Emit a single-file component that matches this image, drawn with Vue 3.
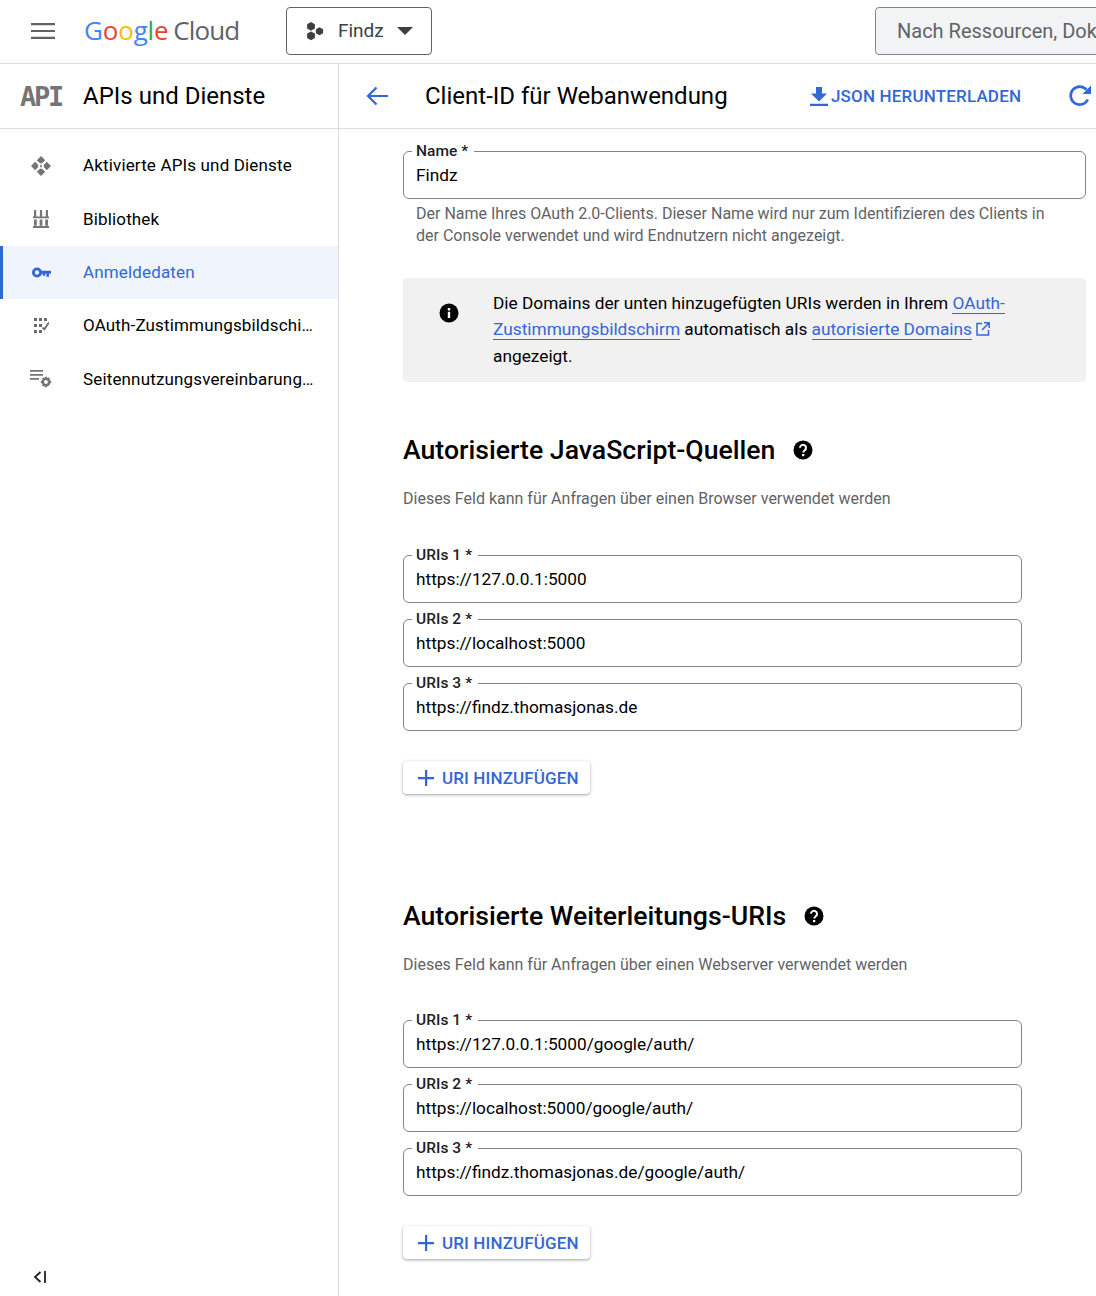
<script setup>
const navItems = [
  { id: 'apis', label: 'Aktivierte APIs und Dienste' },
  { id: 'lib', label: 'Bibliothek' },
  { id: 'creds', label: 'Anmeldedaten', active: true },
  { id: 'oauth', label: 'OAuth-Zustimmungsbildschirm' },
  { id: 'terms', label: 'Seitennutzungsvereinbarungen' }
]

const sections = [
  {
    title: 'Autorisierte JavaScript-Quellen',
    hint: 'Dieses Feld kann für Anfragen über einen Browser verwendet werden',
    uris: ['https://127.0.0.1:5000', 'https://localhost:5000', 'https://findz.thomasjonas.de']
  },
  {
    title: 'Autorisierte Weiterleitungs-URIs',
    hint: 'Dieses Feld kann für Anfragen über einen Webserver verwendet werden',
    uris: [
      'https://127.0.0.1:5000/google/auth/',
      'https://localhost:5000/google/auth/',
      'https://findz.thomasjonas.de/google/auth/'
    ]
  }
]
</script>

<template>
  <div class="page">
    <header class="topbar">
      <svg class="menu-icon" width="24" height="16" viewBox="0 0 24 16">
        <path d="M0 0h24v2.2H0zM0 6.9h24v2.2H0zM0 13.8h24V16H0z" fill="#5f6368" />
      </svg>
      <div class="logo">
        <span class="g-blue">G</span><span class="g-red">o</span><span class="g-yellow">o</span><span class="g-blue">g</span><span class="g-green">l</span><span class="g-red">e</span>
        <span class="cloud">Cloud</span>
      </div>
      <button class="project">
        <svg width="20" height="20" viewBox="0 0 20 20">
          <path fill="#3c4043" d="M6 1l3.9 2.2v4.4L6 9.8 2.1 7.6V3.2zM6 10.4l3.9 2.2v4.4L6 19.200l-3.900-2.200v-4.400zM14.500 6.200l3.600 2v4l-3.600 2-3.600-2v-4z" />
        </svg>
        <span class="project-name">Findz</span>
        <span class="caret"></span>
      </button>
      <div class="search">Nach Ressourcen, Dokumentation, Produkten und mehr suchen</div>
    </header>

    <div class="body">
      <aside class="sidebar">
        <div class="side-head">
          <span class="api-mark">API</span>
          <span class="side-title">APIs und Dienste</span>
        </div>
        <nav class="nav">
          <a v-for="item in navItems" :key="item.id" class="nav-item" :class="{ active: item.active }">
            <span class="nav-icon">
              <svg v-if="item.id === 'apis'" width="20" height="20" viewBox="0 0 20 20" fill="#757575">
                <path d="M10 0l4.200 4.200L11 7.200H9L5.800 4.200zM10 20l4.200-4.200L11 12.800H9l-3.200 3zM0 10l4.200-4.200L7.200 9v2l-3 3.200zM20 10l-4.200-4.200L12.800 9v2l3 3.200z" />
                <path d="M9 8.700h2v1H9zM9 10.300h2v1H9z" />
              </svg>
              <svg v-else-if="item.id === 'lib'" width="16" height="18" viewBox="0 0 16 18" fill="#757575">
                <path d="M1 0h2.200v6.500H1zM6.900 0h2.200v6.500H6.900zM12.800 0H15v6.500h-2.200zM0 6.500h16v1.800H0zM1 9.400h2.800v6.400H1zM6.600 9.400h2.800v6.400H6.600zM12.200 9.400H15v6.400h-2.800zM0 16h16v2H0z" />
              </svg>
              <svg v-else-if="item.id === 'creds'" width="19" height="11" viewBox="0 0 19 11">
                <circle cx="5" cy="5.500" r="3.600" fill="none" stroke="#3367d6" stroke-width="2.800" />
                <path d="M9 3.800h10v3h-2v3h-2.600v-3h-1.200v2H10.800V6.800H9z" fill="#3367d6" />
              </svg>
              <svg v-else-if="item.id === 'oauth'" width="15" height="15" viewBox="0 0 15 15" fill="#6b6b6b">
                <path d="M0 0h3v3H0zM5 0h3v3H5zM10 0h3v3h-3zM0 6h3v3H0zM5 6h3v3H5zM0 12h3v3H0zM5 12h3v3H5z" />
                <path d="M8.500 9.500l1.800 1.800L15 4.500" fill="none" stroke="#6b6b6b" stroke-width="1.800" />
              </svg>
              <svg v-else width="22" height="18" viewBox="0 0 22 18" fill="#757575">
                <path d="M0 0h13v1.800H0zM0 4h13v1.800H0zM0 8h9v1.800H0z" />
                <circle cx="16" cy="12" r="3.200" fill="none" stroke="#757575" stroke-width="2.600" />
                <path d="M15 6.800h2v2h-2zM15 15.200h2v2h-2zM10.800 11h2v2h-2zM19.200 11h2v2h-2zM12 8.700l1.400-1.400 1.400 1.400-1.400 1.400zM17.200 14l1.400-1.400 1.400 1.400-1.400 1.400zM12 15.300l1.400-1.400 1.400 1.400-1.400 1.400zM17.200 8.700l1.400-1.400 1.400 1.400-1.400 1.400z" />
              </svg>
            </span>
            <span class="nav-label">{{ item.label }}</span>
          </a>
        </nav>
        <div class="collapse">
          <svg width="14" height="12" viewBox="0 0 14 12" fill="none" stroke="#202124" stroke-width="1.800">
            <path d="M7.500 1L2 6l5.500 5" />
            <path d="M12 0v12" />
          </svg>
        </div>
      </aside>

      <main class="main">
        <div class="subbar">
          <svg class="back" width="22" height="20" viewBox="0 0 22 20" fill="none" stroke="#3367d6" stroke-width="2.200">
            <path d="M22 10H2.500M10.500 1.500L2 10l8.500 8.500" />
          </svg>
          <h1 class="page-title">Client-ID für Webanwendung</h1>
          <a class="download">
            <svg width="18" height="19" viewBox="0 0 18 19" fill="#3367d6">
              <path d="M6 0h6v6.500h5L9 14.500 1 6.500h5zM0 16.800h18V19H0z" />
            </svg>
            <span>JSON HERUNTERLADEN</span>
          </a>
          <svg class="refresh" width="24" height="24" viewBox="0 0 24 24" fill="none">
            <path d="M19.800 15.500A9 9 0 1 1 18.500 5.700" stroke="#3367d6" stroke-width="2.600" />
            <path d="M23 1.500V10h-8.500z" fill="#3367d6" />
          </svg>
        </div>

        <div class="content">
          <div class="field wide">
            <label class="field-label">Name *</label>
            <div class="field-value">Findz</div>
          </div>
          <p class="name-hint">
            Der Name Ihres OAuth 2.0-Clients. Dieser Name wird nur zum Identifizieren des Clients in der Console verwendet und wird Endnutzern nicht angezeigt.
          </p>

          <div class="notice">
            <svg class="notice-icon" width="20" height="20" viewBox="0 0 20 20">
              <circle cx="10" cy="10" r="9.500" fill="#000" />
              <path d="M8.800 8.800h2.400V15H8.800zM8.800 5h2.400v2.400H8.800z" fill="#fff" />
            </svg>
            <p class="notice-text">
              Die Domains der unten hinzugefügten URIs werden in Ihrem <a class="link">OAuth-Zustimmungsbildschirm</a> automatisch als <a class="link">autorisierte Domains</a><svg class="external" width="14" height="14" viewBox="0 0 14 14" fill="none" stroke="#3367d6" stroke-width="1.500">
                <path d="M6 1.500H1v11.500h11.500V8M8 .8h5.200V6M13 1L6 8" />
              </svg>
              angezeigt.
            </p>
          </div>

          <section v-for="section in sections" :key="section.title" class="uri-section">
            <h2 class="section-title">
              {{ section.title }}
              <svg width="20" height="20" viewBox="0 0 20 20">
                <circle cx="10" cy="10" r="9.500" fill="#000" />
                <path d="M7 7.800a3 3 0 1 1 4.800 2.400c-1 .8-1.500 1.200-1.500 2.400" fill="none" stroke="#fff" stroke-width="2" />
                <path d="M9 14h2.300v2.200H9z" fill="#fff" />
              </svg>
            </h2>
            <p class="section-hint">{{ section.hint }}</p>
            <div class="uri-list">
              <div v-for="(uri, i) in section.uris" :key="uri" class="field">
                <label class="field-label">URIs {{ i + 1 }} *</label>
                <div class="field-value">{{ uri }}</div>
              </div>
            </div>
            <button class="add-btn">
              <svg width="18" height="18" viewBox="0 0 18 18">
                <path d="M8 1h2.200v7H17v2.200h-6.800V17H8v-6.800H1V8h7z" fill="#3367d6" />
              </svg>
              URI HINZUFÜGEN
            </button>
          </section>
        </div>
      </main>
    </div>
  </div>
</template>

<style>
html, body {
  margin: 0;
  overflow: hidden;
  background: #fff;
}
</style>

<style scoped>
.page {
  width: 1096px;
  height: 1296px;
  overflow: hidden;
  font-family: Roboto, "Liberation Sans", sans-serif;
  color: #000;
  display: flex;
  flex-direction: column;
}

.topbar {
  height: 64px;
  box-sizing: border-box;
  padding-bottom: 1px;
  flex: none;
  display: flex;
  align-items: center;
  border-bottom: 1px solid #dadce0;
}

.menu-icon {
  margin-left: 31px;
  flex: none;
}

.logo {
  margin-left: 29px;
  width: 202px;
  flex: none;
  font-family: "Open Sans", sans-serif;
  font-size: 26px;
  letter-spacing: -.2px;
  white-space: nowrap;
  padding-bottom: 3px;
}

.g-blue { color: #4285f4; }
.g-red { color: #ea4335; }
.g-yellow { color: #fbbc05; }
.g-green { color: #34a853; }
.cloud { color: #5f6368; letter-spacing: -.9px; margin-left: 5px; }

.project {
  height: 48px;
  width: 146px;
  flex: none;
  display: flex;
  align-items: center;
  padding: 0 0 0 18px;
  border: 1px solid #5f6368;
  border-radius: 4px;
  background: #fff;
  font: inherit;
}

.project-name {
  margin-left: 13px;
  font-size: 19px;
  color: #3c4043;
  padding-bottom: 1px;
}

.caret {
  margin-left: 13px;
  width: 0;
  height: 0;
  border-left: 8px solid transparent;
  border-right: 8px solid transparent;
  border-top: 8px solid #3c4043;
}

.search {
  margin-left: 443px;
  height: 48px;
  width: 500px;
  flex: none;
  box-sizing: border-box;
  padding-left: 21px;
  line-height: 46px;
  border: 1px solid #80868b;
  border-radius: 4px;
  background: #f1f3f4;
  color: #5f6368;
  font-size: 20px;
  white-space: nowrap;
  overflow: hidden;
}

.body {
  flex: 1;
  display: flex;
  min-height: 0;
}

.sidebar {
  width: 339px;
  box-sizing: border-box;
  flex: none;
  border-right: 1px solid #dadce0;
  display: flex;
  flex-direction: column;
}

.side-head {
  height: 64px;
  flex: none;
  display: flex;
  align-items: center;
  border-bottom: 1px solid #dadce0;
}

.api-mark {
  width: 83px;
  box-sizing: border-box;
  padding-left: 20px;
  font-family: "DejaVu Sans Mono", monospace;
  font-weight: 700;
  font-size: 27px;
  letter-spacing: -2.200px;
  color: #757575;
}

.side-title {
  font-size: 24px;
}

.nav {
  padding-top: 10px;
  flex: 1;
}

.nav-item {
  height: 53.4px;
  display: flex;
  align-items: center;
  box-sizing: border-box;
  border-left: 3px solid transparent;
  font-size: 17px;
  letter-spacing: .15px;
}

.nav-item.active {
  border-left-color: #3367d6;
  background: #eff4fd;
  color: #3367d6;
}

.nav-icon {
  width: 84px;
  flex: none;
  display: flex;
  justify-content: center;
  margin-left: -4px;
}

.nav-label {
  width: 231px;
  white-space: nowrap;
  overflow: hidden;
  text-overflow: ellipsis;
  padding-bottom: 1px;
}

.collapse {
  height: 25px;
  padding-left: 33px;
  display: flex;
  align-items: flex-start;
}

.main {
  flex: 1;
  min-width: 0;
}

.subbar {
  height: 64px;
  display: flex;
  align-items: center;
  border-bottom: 1px solid #dadce0;
  white-space: nowrap;
}

.back {
  margin-left: 27px;
  flex: none;
}

.page-title {
  margin: 0 0 0 37px;
  width: 385px;
  flex: none;
  font-size: 24px;
  font-weight: 400;
}

.download {
  display: flex;
  align-items: center;
  gap: 3px;
  width: 258px;
  flex: none;
  color: #3367d6;
  font-size: 17px;
  font-weight: 500;
  letter-spacing: .17px;
}

.refresh {
  flex: none;
}

.content {
  padding: 22px 10px 0 64px;
}

.field {
  position: relative;
  height: 48px;
  box-sizing: border-box;
  border: 1px solid #80868b;
  border-radius: 6px;
}

.field-label {
  position: absolute;
  left: 8px;
  top: -10px;
  padding: 0 6px 0 4px;
  background: #fff;
  font-size: 15.500px;
  line-height: 18px;
  font-weight: 500;
  color: #202124;
  letter-spacing: .05px;
}

.field-value {
  padding-left: 12px;
  line-height: 46px;
  font-size: 17.250px;
}

.name-hint {
  margin: 4px 30px 0 13px;
  font-size: 16px;
  line-height: 22px;
  color: #5f6368;
}

.notice {
  margin-top: 31px;
  height: 104px;
  box-sizing: border-box;
  display: flex;
  background: #f1f1f1;
  border-radius: 4px;
  padding: 12px 60px 0 36px;
}

.notice-icon {
  margin-top: 13px;
  flex: none;
}

.notice-text {
  margin: 0 0 0 34px;
  font-size: 17.300px;
  line-height: 26.400px;
}

.link {
  color: #3367d6;
  border-bottom: 1px solid #3367d6;
}

.external {
  margin-left: 4px;
  vertical-align: -1px;
}

.uri-section {
  height: 466px;
}

.uri-section + .uri-section .uri-list {
  margin-top: 5px;
}

.section-title {
  margin: 0;
  padding-top: 50px;
  height: 36px;
  line-height: 36px;
  font-size: 26.650px;
  font-weight: 500;
  display: flex;
  align-items: center;
  gap: 18px;
}

.section-hint {
  margin: 0;
  padding-top: 19px;
  height: 62px;
  font-size: 16px;
  line-height: 24px;
  color: #5f6368;
}

.uri-list {
  margin-top: 6px;
  width: 619px;
  display: flex;
  flex-direction: column;
  gap: 16px;
}

.add-btn {
  margin-top: 30px;
  height: 33px;
  display: flex;
  align-items: center;
  gap: 7px;
  padding: 0 11px 0 14px;
  border: none;
  border-radius: 4px;
  background: #fff;
  box-shadow: 0 1px 2px rgba(60, 64, 67, .3), 0 1px 3px 1px rgba(60, 64, 67, .15);
  color: #3367d6;
  font-family: inherit;
  font-size: 17px;
  font-weight: 500;
  letter-spacing: .12px;
}
</style>
